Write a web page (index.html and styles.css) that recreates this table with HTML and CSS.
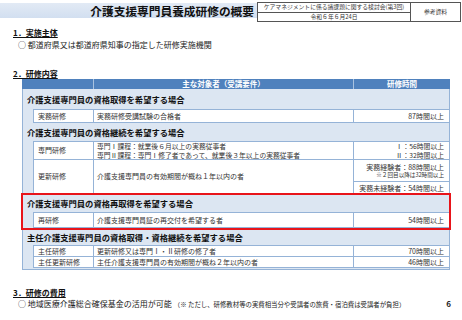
FILE: index.html
```html
<!DOCTYPE html>
<html lang="ja">
<head>
<meta charset="utf-8">
<title>介護支援専門員養成研修の概要</title>
<link rel="stylesheet" href="styles.css">
</head>
<body>
<div class="page">
  <header class="top">
    <div class="title-band"><h1>介護支援専門員養成研修の概要</h1></div>
    <div class="meta">
      <div class="meta-left">
        <div class="meta-row">ケアマネジメントに係る諸課題に関する検討会(第3回)</div>
        <div class="meta-row">令和６年６月24日</div>
      </div>
      <div class="meta-right">参考資料</div>
    </div>
  </header>

  <section class="sec sec1">
    <h2>1．実施主体</h2>
    <p class="item">○ 都道府県又は都道府県知事の指定した研修実施機関</p>
  </section>

  <section class="sec sec2">
    <h2>2．研修内容</h2>
    <div class="tbl">
      <div class="thead">
        <div></div>
        <div>主な対象者（受講要件）</div>
        <div>研修時間</div>
      </div>

      <div class="group g1">
        <div class="gtitle">介護支援専門員の資格取得を希望する場合</div>
        <div class="rows">
          <div class="c1 h-a">実務研修</div>
          <div class="c2 h-a">実務研修受講試験の合格者</div>
          <div class="c3 h-a">87時間以上</div>
        </div>
      </div>

      <div class="group g2">
        <div class="gtitle">介護支援専門員の資格継続を希望する場合</div>
        <div class="rows">
          <div class="c1 h-b">専門研修</div>
          <div class="c2 h-b lines">
            <span>専門Ⅰ課程：就業後６月以上の実務従事者</span>
            <span>専門Ⅱ課程：専門Ⅰ修了者であって、就業後３年以上の実務従事者</span>
          </div>
          <div class="c3 h-b lines">
            <span>Ⅰ：56時間以上</span>
            <span>Ⅱ：32時間以上</span>
          </div>
          <div class="c1 h-c">更新研修</div>
          <div class="c2 h-c">介護支援専門員の有効期間が概ね１年以内の者</div>
          <div class="c3 h-c split">
            <div class="part part-top">
              <span>実務経験者：88時間以上</span>
              <span class="small">※２回目以降は32時間以上</span>
            </div>
            <div class="part part-bottom">
              <span>実務未経験者：54時間以上</span>
            </div>
          </div>
        </div>
      </div>

      <div class="group g3">
        <div class="gtitle">介護支援専門員の資格再取得を希望する場合</div>
        <div class="rows">
          <div class="c1 h-d">再研修</div>
          <div class="c2 h-d">介護支援専門員証の再交付を希望する者</div>
          <div class="c3 h-d">54時間以上</div>
        </div>
      </div>

      <div class="group g4">
        <div class="gtitle">主任介護支援専門員の資格取得・資格継続を希望する場合</div>
        <div class="rows">
          <div class="c1 h-e">主任研修</div>
          <div class="c2 h-e">更新研修又は専門Ⅰ・Ⅱ研修の修了者</div>
          <div class="c3 h-e">70時間以上</div>
          <div class="c1 h-e">主任更新研修</div>
          <div class="c2 h-e">主任介護支援専門員の有効期間が概ね２年以内の者</div>
          <div class="c3 h-e">46時間以上</div>
        </div>
      </div>
    </div>
  </section>

  <section class="sec sec3">
    <h2>3．研修の費用</h2>
    <div class="item last">
      <span>○ 地域医療介護総合確保基金の活用が可能</span>
      <span class="note">（※ ただし、研修教材等の実費相当分や受講者の旅費・宿泊費は受講者が負担）</span>
      <span class="pagenum">6</span>
    </div>
  </section>
</div>
</body>
</html>
```

FILE: styles.css
```css
* {
  box-sizing: border-box;
  margin: 0;
  padding: 0;
}

html,
body {
  width: 462px;
  height: 320px;
  background: #fff;
}

body {
  font-family: "Noto Sans CJK JP", "Noto Sans", sans-serif;
  color: #222;
  overflow: hidden;
}

/* ---------- header ---------- */
.top {
  display: flex;
  align-items: flex-start;
  padding-top: 2px;
  height: 22px;
}

.title-band {
  width: 257px;
  height: 15px;
  margin-top: 1px;
  background: linear-gradient(#e2eaf5, #d2dff0);
  display: flex;
  align-items: center;
  justify-content: flex-end;
  padding-right: 3px;
}

.title-band h1 {
  font-size: 11.7px;
  font-weight: 700;
  line-height: 1;
  color: #111;
}

.meta {
  display: flex;
  width: 204px;
  height: 20px;
  border: 1px solid #555;
  font-size: 5.8px;
  line-height: 1;
  color: #333;
}

.meta-left {
  width: 153px;
  display: flex;
  flex-direction: column;
  border-right: 1px solid #555;
}

.meta-row {
  flex: 1;
  display: flex;
  align-items: center;
  justify-content: center;
}

.meta-row + .meta-row {
  border-top: 1px solid #555;
}

.meta-right {
  flex: 1;
  display: flex;
  align-items: center;
  justify-content: center;
}

/* ---------- sections ---------- */
h2 {
  font-size: 8px;
  font-weight: 700;
  line-height: 10px;
  text-decoration: underline;
  margin-left: 13px;
  color: #111;
}

.sec1 {
  margin-top: 6px;
}

.item {
  font-size: 8px;
  line-height: 10px;
  margin-left: 18px;
  margin-top: 2px;
  color: #222;
}

.sec2 {
  margin-top: 19px;
}

.sec3 {
  margin-top: 18px;
}

.sec3 .item {
  margin-top: 1px;
}

.item.last {
  display: flex;
  align-items: baseline;
}

.note {
  font-size: 6.4px;
  margin-left: 2px;
}

.pagenum {
  margin-left: auto;
  margin-right: 11px;
  font-weight: 700;
  font-size: 8px;
}

/* ---------- table ---------- */
.tbl {
  margin-left: 22px;
  width: 428px;
}

.thead {
  display: grid;
  grid-template-columns: 71px 259px 1fr;
  column-gap: 1px;
  background: #a9c2e0;
  height: 10px;
}

.thead > div {
  background: #4f81bd;
  color: #fff;
  font-size: 7.5px;
  font-weight: 700;
  line-height: 10px;
  text-align: center;
}

.group {
  background: #dce6f2;
  border-left: 1px solid #95b3d7;
  border-right: 1px solid #95b3d7;
}

.gtitle {
  display: flex;
  align-items: center;
  padding-left: 4px;
  font-size: 8.3px;
  font-weight: 700;
  color: #111;
  line-height: 1;
}

.g1 .gtitle { height: 20px; }
.g2 .gtitle { height: 18px; }
.g3 .gtitle { height: 18px; }
.g4 .gtitle { height: 16px; }

.g3 {
  padding-bottom: 1px;
  outline: 2px solid #e8141a;
  outline-offset: -1px;
  position: relative;
  z-index: 1;
}

.g4 {
  padding-bottom: 1px;
  border-bottom: 1px solid #95b3d7;
}

.rows {
  margin-left: 10px;
  display: grid;
  grid-template-columns: 59px 259px 1fr;
  gap: 1px;
  background: #95b3d7;
  border: 1px solid #95b3d7;
  border-right: 0;
}

.rows > div {
  background: #fff;
  font-size: 7px;
  line-height: 1;
  display: flex;
  align-items: center;
  color: #333;
}

.c1 { padding-left: 4px; }
.c2 { padding-left: 3px; }
.c3 {
  justify-content: flex-end;
  padding-right: 5px;
}

.h-a { height: 12px; }
.h-b { height: 17px; }
.h-c { height: 33px; }
.h-d { height: 14px; }
.h-e { height: 10px; }

.rows > .lines {
  flex-direction: column;
  justify-content: center;
  align-items: flex-start;
  font-size: 6.8px;
  line-height: 8.5px;
}

.rows > .c3.lines {
  align-items: flex-end;
}

.rows > .split {
  flex-direction: column;
  align-items: stretch;
  padding: 0;
  gap: 1px;
  background: #95b3d7;
}

.part {
  background: #fff;
  display: flex;
  flex-direction: column;
  align-items: flex-end;
  justify-content: center;
  padding-right: 5px;
  line-height: 8px;
}

.part-top {
  height: 21px;
}

.part-bottom {
  flex: 1;
}

.small {
  font-size: 5.6px;
}
```
